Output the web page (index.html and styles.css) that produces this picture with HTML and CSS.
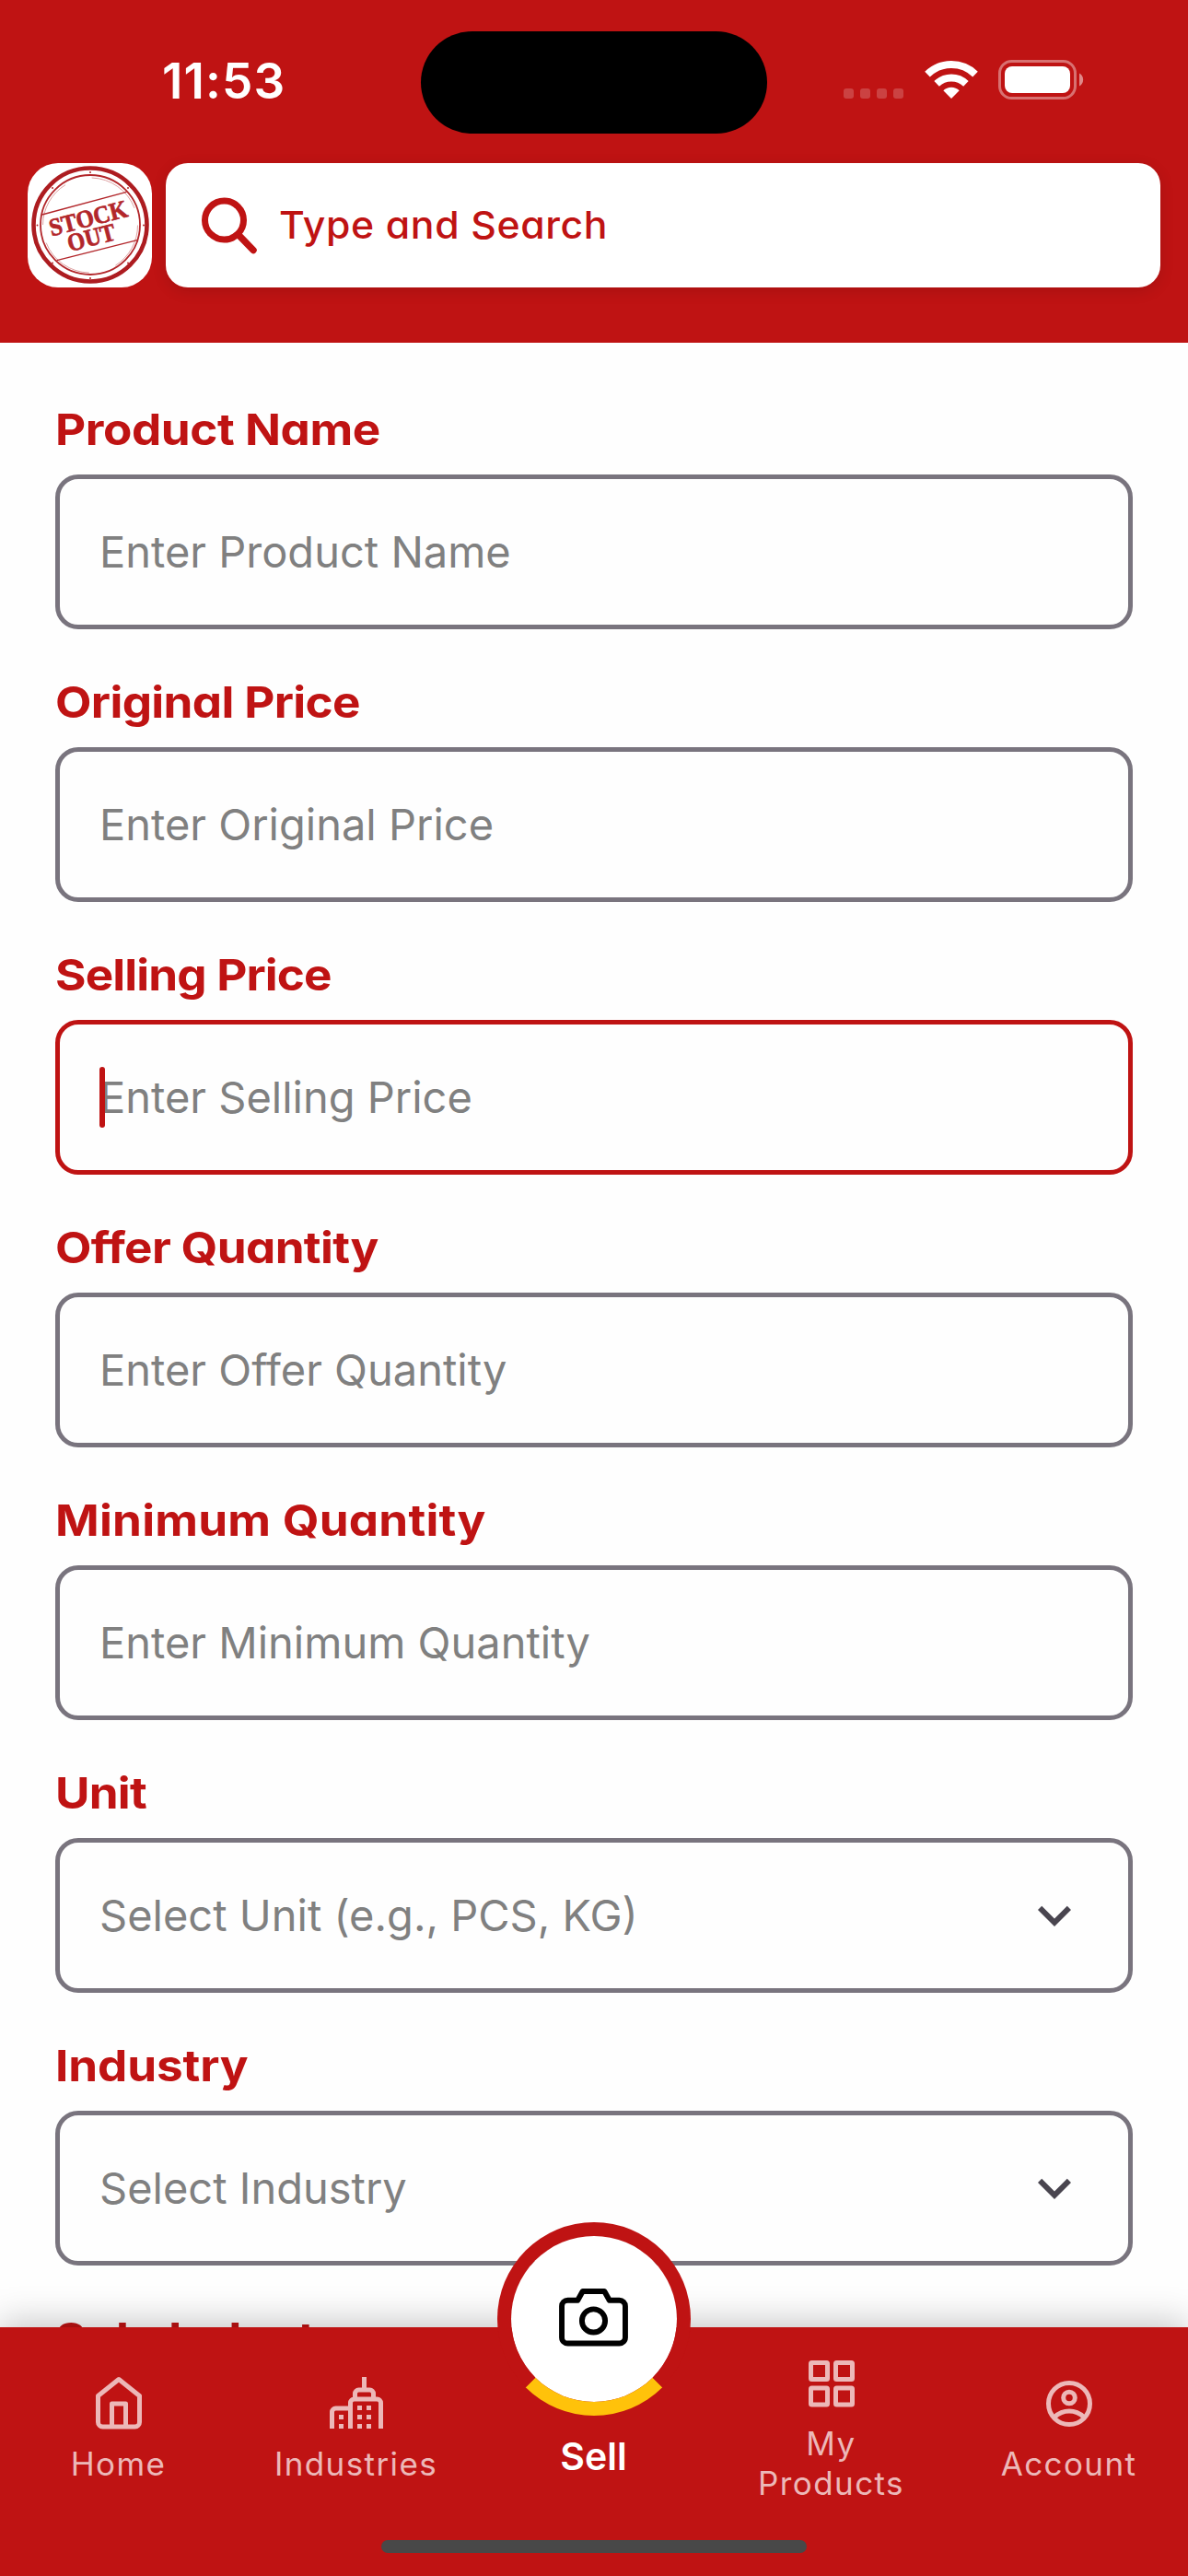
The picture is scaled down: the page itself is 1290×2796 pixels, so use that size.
FILE: index.html
```html
<!DOCTYPE html>
<html lang="en">
<head>
<meta charset="utf-8">
<title>Stock Out - Sell</title>
<link rel="stylesheet" href="styles.css">
</head>
<body>
<div class="screen">
  <header class="header">
    <div class="status">
      <span class="time">11:53</span>
      <div class="island"></div>
      <div class="signals">
        <div class="dots"><i></i><i></i><i></i><i></i></div>
        <svg class="wifi" width="58" height="42" viewBox="0 0 58 42">
          <g fill="none" stroke="#fff" stroke-width="8">
            <path d="M3 15.6A37.3 37.3 0 0 1 55 15.6"/>
            <path d="M13.1 25.8A23 23 0 0 1 44.900 25.8"/>
          </g>
          <path fill="#fff" d="M29 42 20.300 33.200A12.500 12.500 0 0 1 37.700 33.200Z"/>
        </svg>
        <svg class="battery" width="94" height="43" viewBox="0 0 94 43">
          <rect x="1.500" y="1.500" width="82" height="40" rx="13" fill="none" stroke="#fff" stroke-opacity=".4" stroke-width="3"/>
          <rect x="7" y="7" width="71" height="29" rx="8" fill="#fff"/>
          <path d="M88 14.500a8 8 0 0 1 0 14z" fill="#fff" fill-opacity=".5"/>
        </svg>
      </div>
    </div>
    <div class="topbar">
      <svg class="logo" width="135" height="135" viewBox="0 0 135 135">
        <circle cx="68" cy="67" r="61.500" fill="none" stroke="#ad1c20" stroke-width="4.600"/>
        <circle cx="68" cy="67" r="54" fill="none" stroke="#b2262a" stroke-width="1.800"/>
        <circle cx="68" cy="67.500" r="51.500" fill="none" stroke="#d58a8c" stroke-width=".8" stroke-dasharray="52 30 60 20"/>
        <g stroke="#b2262a" stroke-width="1.300">
          <path d="M15.700 56 107.500 31.300"/>
          <path d="M31.700 105.700 119 83.700"/>
        </g>
        <g fill="#b2262a">
          <circle cx="68" cy="10" r="1"/><circle cx="68" cy="125" r="1"/>
          <circle cx="10.500" cy="67.500" r="1"/><circle cx="126" cy="67.500" r="1"/>
          <circle cx="27" cy="27" r="1"/><circle cx="109" cy="27" r="1"/>
          <circle cx="27" cy="108.500" r="1"/><circle cx="109" cy="108.500" r="1"/>
        </g>
        <g class="stamp" text-anchor="middle">
          <text transform="translate(68 68.500) rotate(-14.500)" textLength="87" lengthAdjust="spacingAndGlyphs">STOCK</text>
          <text transform="translate(71.500 89.500) rotate(-14.500)" textLength="53" lengthAdjust="spacingAndGlyphs">OUT</text>
        </g>
      </svg>
      <div class="search">
        <svg width="60" height="62" viewBox="0 0 60 62" fill="none" stroke="#bf1313">
          <circle cx="24.500" cy="25" r="21" stroke-width="7"/>
          <path d="M40 41 56 57.500" stroke-width="7.500" stroke-linecap="round"/>
        </svg>
        <span>Type and Search</span>
      </div>
    </div>
  </header>

  <main class="form">
    <div class="field"><div class="label l-product">Product Name</div><div class="box"><span class="ph">Enter Product Name</span></div></div>
    <div class="field"><div class="label l-original">Original Price</div><div class="box"><span class="ph">Enter Original Price</span></div></div>
    <div class="field"><div class="label l-selling">Selling Price</div><div class="box focused"><span class="ph">Enter Selling Price</span></div></div>
    <div class="field"><div class="label l-offer">Offer Quantity</div><div class="box"><span class="ph">Enter Offer Quantity</span></div></div>
    <div class="field"><div class="label l-minimum">Minimum Quantity</div><div class="box"><span class="ph">Enter Minimum Quantity</span></div></div>
    <div class="field"><div class="label l-unit">Unit</div><div class="box"><span class="ph">Select Unit (e.g., PCS, KG)</span>
      <svg class="chevron" width="72" height="72" viewBox="0 0 24 24"><path d="M7.410 8.580 12 13.170l4.590-4.590L18 10l-6 6-6-6z"/></svg></div></div>
    <div class="field"><div class="label l-industry">Industry</div><div class="box"><span class="ph">Select Industry</span>
      <svg class="chevron" width="72" height="72" viewBox="0 0 24 24"><path d="M7.410 8.580 12 13.170l4.590-4.590L18 10l-6 6-6-6z"/></svg></div></div>
    <div class="field"><div class="label l-sub">Sub-Industry</div></div>
  </main>

  <nav class="nav">
    <div class="tabs">
      <div class="tab">
        <svg width="60" height="60" viewBox="0 0 60 60" fill="none" stroke="#ecb8b8" stroke-width="5">
          <path d="M7.500 21.500 30 3.500l22.500 18V50a5 5 0 0 1-5 5h-35a5 5 0 0 1-5-5z" stroke-linejoin="round"/>
          <path d="M22.500 55V30h15v25" stroke-linejoin="round"/>
        </svg>
        <span>Home</span>
      </div>
      <div class="tab">
        <svg width="60" height="60" viewBox="1 0 60 60" fill="none" stroke="#ecb8b8" stroke-width="5">
          <path d="M39.500 1v11.500M29.500 25v-6a4 4 0 0 1 4-4h12a4 4 0 0 1 4 4v6M24.500 57V29a4 4 0 0 1 4-4h25a4 4 0 0 1 4 4v28M4.500 57V39a4 4 0 0 1 4-4h16"/>
          <path d="M14.500 42v15M34.500 32v25M44.500 32v25" stroke-dasharray="5 5"/>
        </svg>
        <span>Industries</span>
      </div>
      <div class="tab active"><span>Sell</span></div>
      <div class="tab">
        <svg width="60" height="60" viewBox="0 0 60 60" fill="none" stroke="#ecb8b8" stroke-width="5">
          <rect x="7.500" y="7.500" width="18" height="18" rx="1"/><rect x="34.500" y="7.500" width="18" height="18" rx="1"/>
          <rect x="7.500" y="35" width="18" height="18" rx="1"/><rect x="34.500" y="35" width="18" height="18" rx="1"/>
        </svg>
        <span>My<br>Products</span>
      </div>
      <div class="tab">
        <svg width="60" height="60" viewBox="0 0 60 60" fill="none" stroke="#ecb8b8" stroke-width="5">
          <circle cx="30" cy="30" r="22.500"/><circle cx="30" cy="23.500" r="6.300"/>
          <path d="M14 44.500q7-6.500 16-6.500t16 6.500"/>
        </svg>
        <span>Account</span>
      </div>
    </div>
    <div class="sell-button">
      <svg width="75" height="63" viewBox="0 0 76 64" fill="none" stroke="#000" stroke-width="6">
        <path d="M26 3H50L55.500 13H66.500a6.500 6.500 0 0 1 6.500 6.500V54a6.500 6.500 0 0 1-6.500 6.500H9.500A6.500 6.500 0 0 1 3 54V19.500A6.500 6.500 0 0 1 9.500 13H20.500z" stroke-linejoin="round"/>
        <circle cx="38" cy="35.500" r="12.800"/>
      </svg>
    </div>
    <div class="home-indicator"></div>
  </nav>
</div>
</body>
</html>
```
FILE: styles.css
```css
* { box-sizing: border-box; }
body { margin: 0; background: #fefefe; font-family: Inter, "Liberation Sans", sans-serif; }
svg { display: block; flex: none; }
.screen { width: 1290px; height: 2796px; display: flex; flex-direction: column; overflow: hidden; background: #fefefe; }

.header { height: 372px; flex: none; background: #bf1313; color: #fff; }
.status { height: 177px; display: grid; grid-template-columns: 457px 376px 1fr; }
.time { padding-left: 176px; font-size: 53px; font-weight: 600; line-height: 176px; letter-spacing: 1.1px; }
.island { height: 111px; margin-top: 33.5px; border-radius: 56px; background: #000; }
.signals { display: flex; align-items: flex-start; padding: 65px 0 0 83px; }
.dots { display: flex; gap: 7px; margin-top: 31px; }
.dots i { width: 11px; height: 11px; border-radius: 3px; background: rgba(255, 255, 255, .2); }
.wifi { margin-left: 23px; }
.battery { margin-left: 22px; }

.topbar { display: flex; gap: 15px; padding: 0 30px; }
.logo { background: #fff; border-radius: 33px; }
.stamp { font: bold 27px "Liberation Serif", serif; fill: #b2262a; stroke: #b2262a; stroke-width: .7; }
.search { flex: 1; height: 135px; display: flex; align-items: center; gap: 24px; padding-left: 39px; background: #fff; border-radius: 24px; color: #bf1313; box-shadow: 0 4px 16px rgba(0, 0, 0, .12); }
.search span { padding-bottom: 1px; font-size: 41px; font-weight: 500; line-height: 60px; letter-spacing: .6px; font-feature-settings: "cv11"; transform: scaleX(1.042); transform-origin: left; }

.form { flex: 1; min-height: 0; overflow: hidden; display: flex; flex-direction: column; gap: 49px; padding: 64px 60px 0; }
.field { flex: none; display: flex; flex-direction: column; gap: 19px; }
.label { align-self: flex-start; height: 60px; font-size: 47px; font-weight: 700; line-height: 60px; color: #bf1313; white-space: nowrap; font-feature-settings: "cv11"; letter-spacing: -.4px; transform: scaleX(1.09); transform-origin: left; }
.l-original { letter-spacing: -.6px; }
.l-selling { letter-spacing: -.8px; }
.l-offer { letter-spacing: -.6px; }
.l-minimum { letter-spacing: .2px; }
.l-unit { letter-spacing: -.7px; }
.l-industry { letter-spacing: -.1px; }
.l-sub { letter-spacing: .3px; }
.box { position: relative; height: 168px; display: flex; align-items: center; justify-content: space-between; padding: 0 44px 0 43px; border: 5px solid #79747e; border-radius: 25px; }
.focused { border-color: #bf1313; }
.focused::before { content: ""; position: absolute; left: 43px; top: 46px; width: 6px; height: 66px; border-radius: 3px; background: #bf1313; }
.ph { font-size: 47px; line-height: 60px; color: #808080; white-space: nowrap; }
.chevron { fill: #49454f; }

.nav { position: relative; height: 270px; flex: none; background: #bf1313; box-shadow: 0 -6px 36px rgba(0, 0, 0, .22); }
.tabs { display: grid; grid-template-columns: repeat(5, 258px); height: 190px; }
.tab { display: flex; flex-direction: column; align-items: center; justify-content: center; gap: 14px; padding: 31px 1px 0 0; color: #ecb8b8; text-align: center; }
.tab span { font-size: 35px; line-height: 43px; letter-spacing: 1.4px; }
.tab.active { justify-content: flex-end; padding-bottom: 26px; color: #fff; }
.tab.active span { font-size: 41px; font-weight: 600; letter-spacing: 0; line-height: 50px; }
.sell-button { position: absolute; left: 540px; top: -114px; width: 210px; height: 210px; display: flex; align-items: center; justify-content: center; padding: 0 1px 3px 0; border: 15px solid #bf1313; border-bottom-color: #ffc20a; border-radius: 50%; background: #fff; background-clip: padding-box; }
.home-indicator { width: 462px; height: 14px; margin: 41px auto 0; border-radius: 7px; background: #484848; }
```
